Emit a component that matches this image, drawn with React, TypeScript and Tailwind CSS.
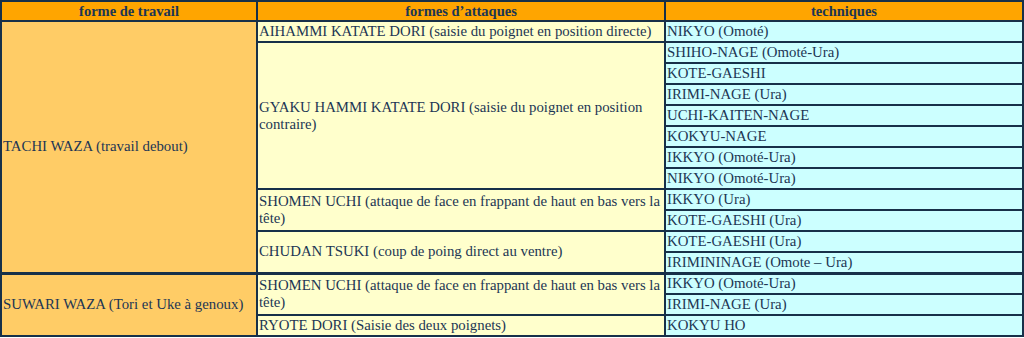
const groups = [
  {
    forme: 'TACHI WAZA (travail debout)',
    attaques: [
      {
        label: 'AIHAMMI KATATE DORI (saisie du poignet en position directe)',
        techniques: ['NIKYO (Omoté)'],
      },
      {
        label: 'GYAKU HAMMI KATATE DORI (saisie du poignet en position contraire)',
        techniques: [
          'SHIHO-NAGE (Omoté-Ura)',
          'KOTE-GAESHI',
          'IRIMI-NAGE (Ura)',
          'UCHI-KAITEN-NAGE',
          'KOKYU-NAGE',
          'IKKYO (Omoté-Ura)',
          'NIKYO (Omoté-Ura)',
        ],
      },
      {
        label: 'SHOMEN UCHI (attaque de face en frappant de haut en bas vers la tête)',
        techniques: ['IKKYO (Ura)', 'KOTE-GAESHI (Ura)'],
      },
      {
        label: 'CHUDAN TSUKI (coup de poing direct au ventre)',
        techniques: ['KOTE-GAESHI (Ura)', 'IRIMININAGE (Omote – Ura)'],
      },
    ],
  },
  {
    forme: 'SUWARI WAZA (Tori et Uke à genoux)',
    attaques: [
      {
        label: 'SHOMEN UCHI (attaque de face en frappant de haut en bas vers la tête)',
        techniques: ['IKKYO (Omoté-Ura)', 'IRIMI-NAGE (Ura)'],
      },
      {
        label: 'RYOTE DORI (Saisie des deux poignets)',
        techniques: ['KOKYU HO'],
      },
    ],
  },
];

const cell = 'border-2 border-[#173049] pl-[1px] pr-0 py-0 h-[21px] align-middle text-left';
const head = 'border-2 border-[#173049] h-[20px] font-bold text-[14.5px] leading-[16px]';

export default function App() {
  return (
    <div className="w-[1024px] h-[338px] bg-white overflow-hidden">
      <table className="w-[1024px] table-fixed border-collapse text-[#1c3654] text-[14.8px] leading-[17px] font-['Liberation_Serif','Times_New_Roman',serif]">
        <thead>
          <tr className="bg-[#ffa500]">
            <th className={head + ' w-[256px]'}>forme de travail</th>
            <th className={head + ' w-[408px]'}>formes d’attaques</th>
            <th className={head}>techniques</th>
          </tr>
        </thead>
        <tbody>
          {groups.map((g, gi) => {
            const total = g.attaques.reduce((n, a) => n + a.techniques.length, 0);
            return g.attaques.flatMap((a, ai) =>
              a.techniques.map((t, ti) => {
                // thicker rule between the two work forms
                const sep = gi > 0 && ai === 0 && ti === 0 ? ' border-t-[3px]' : '';
                return (
                  <tr key={g.forme + a.label + t}>
                    {ai === 0 && ti === 0 && (
                      <td rowSpan={total} className={cell + sep + ' bg-[#ffcc66]'}>
                        {g.forme}
                      </td>
                    )}
                    {ti === 0 && (
                      <td rowSpan={a.techniques.length} className={cell + sep + ' bg-[#ffffcc]'}>
                        {a.label}
                      </td>
                    )}
                    <td className={cell + sep + ' bg-[#ccffff]'}>{t}</td>
                  </tr>
                );
              }),
            );
          })}
        </tbody>
      </table>
    </div>
  );
}
